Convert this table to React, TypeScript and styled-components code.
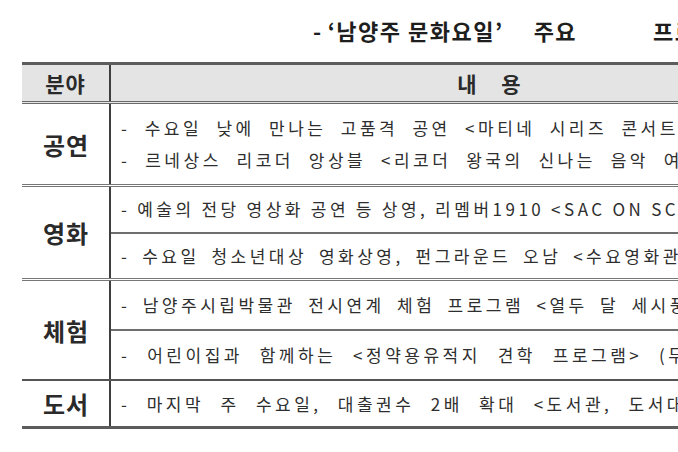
import React from 'react';
import styled, { createGlobalStyle } from 'styled-components';

const GlobalStyle = createGlobalStyle`
  html, body {
    margin: 0;
    padding: 0;
    background: #ffffff;
  }
  body {
    width: 678px;
    height: 452px;
    overflow: hidden;
    font-family: "Noto Sans CJK KR", "Noto Sans", sans-serif;
    color: #2b2b2b;
  }
`;

const Page = styled.div`
  width: 678px;
  height: 452px;
  overflow: hidden;
  padding: 0 0 0 22px;
  box-sizing: border-box;
`;

const Title = styled.div`
  height: 62px;
  display: flex;
  align-items: center;
  padding-left: 291px;
  padding-bottom: 2px;
  box-sizing: border-box;
  white-space: nowrap;
  font-size: 22px;
  font-weight: 700;
  letter-spacing: 1.5px;
  color: #1e1e1e;
`;

// each piece of the title sits after a gap of its own width
const TitlePart = styled.span<{ $gap?: number }>`
  margin-left: ${({ $gap }) => $gap ?? 0}px;
`;

const Table = styled.div`
  width: 850px;
  border-top: 3px solid #5c5c5c;
  border-bottom: 3px solid #5c5c5c;
`;

const HeaderRow = styled.div`
  display: grid;
  grid-template-columns: 89px 1fr;
  height: 39px;
  background: #e4e4e4;
  border-bottom: 3px double #6a6a6a;
  box-sizing: border-box;
`;

const HeadCell = styled.div<{ $divider?: boolean; $spread?: number }>`
  display: flex;
  align-items: center;
  justify-content: center;
  font-size: 21px;
  font-weight: 700;
  color: #2a2a2a;
  letter-spacing: ${({ $spread }) => $spread ?? 1}px;
  word-spacing: ${({ $spread }) => ($spread ? $spread * 2 : 0)}px;
  border-right: ${({ $divider }) => ($divider ? '2px solid #3e3e3e' : 'none')};
`;

const Group = styled.div<{ $height: number; $edge: string }>`
  display: grid;
  grid-template-columns: 89px 1fr;
  height: ${({ $height }) => $height}px;
  box-sizing: border-box;
  border-bottom: ${({ $edge }) => $edge};
  &:last-child {
    border-bottom: none;
  }
`;

const Label = styled.div`
  display: flex;
  align-items: center;
  justify-content: center;
  border-right: 2px solid #3e3e3e;
  font-size: 24px;
  font-weight: 700;
  letter-spacing: 1px;
  padding-left: 1px;
  color: #2a2a2a;
`;

const Items = styled.div`
  display: flex;
  flex-direction: column;
  min-width: 0;
`;

const Item = styled.div<{ $split?: boolean }>`
  flex: 1;
  display: flex;
  flex-direction: column;
  justify-content: center;
  gap: 12px;
  padding-left: 10px;
  border-top: ${({ $split }) => ($split ? '2px solid #6e6e6e' : 'none')};
`;

const Line = styled.div<{ $ws: number }>`
  white-space: nowrap;
  font-size: 17px;
  line-height: 20px;
  letter-spacing: 3.5px;
  word-spacing: ${({ $ws }) => $ws}px;
  color: #2e2e2e;
`;

interface Entry {
  text: string;
  ws: number;
}

interface Section {
  label: string;
  height: number;
  edge: string;
  blocks: Entry[][];
}

const sections: Section[] = [
  {
    label: '공연',
    height: 83,
    edge: '3px double #777777',
    blocks: [
      [
        { text: '- 수요일 낮에 만나는 고품격 공연 <마티네 시리즈 콘서트>', ws: 7 },
        { text: '- 르네상스 리코더 앙상블 <리코더 왕국의 신나는 음악 여행>', ws: 7.5 },
      ],
    ],
  },
  {
    label: '영화',
    height: 94,
    edge: '3px double #777777',
    blocks: [
      [{ text: '- 예술의 전당 영상화 공연 등 상영, 리멤버1910 <SAC ON SCREEN>', ws: -0.5 }],
      [{ text: '- 수요일 청소년대상 영화상영, 펀그라운드 오남 <수요영화관>', ws: 4.5 }],
    ],
  },
  {
    label: '체험',
    height: 100,
    edge: '2px solid #555555',
    blocks: [
      [{ text: '- 남양주시립박물관 전시연계 체험 프로그램 <열두 달 세시풍속>', ws: 5 }],
      [{ text: '- 어린이집과 함께하는 <정약용유적지 견학 프로그램> (무료)', ws: 9.5 }],
    ],
  },
  {
    label: '도서',
    height: 45,
    edge: 'none',
    blocks: [[{ text: '- 마지막 주 수요일, 대출권수 2배 확대 <도서관, 도서대출>', ws: 9 }]],
  },
];

const App: React.FC = () => {
  return (
    <>
      <GlobalStyle />
      <Page>
        <Title>
          <TitlePart>-</TitlePart>
          <TitlePart $gap={5}>‘남양주 문화요일’</TitlePart>
          <TitlePart $gap={30}>주요</TitlePart>
          <TitlePart $gap={76}>프로그램 -</TitlePart>
        </Title>
        <Table>
          <HeaderRow>
            <HeadCell $divider>분야</HeadCell>
            <HeadCell $spread={5}>내 용</HeadCell>
          </HeaderRow>
          {sections.map((s) => (
            <Group key={s.label} $height={s.height} $edge={s.edge}>
              <Label>{s.label}</Label>
              <Items>
                {s.blocks.map((block, i) => (
                  <Item key={i} $split={i > 0}>
                    {block.map((e) => (
                      <Line key={e.text} $ws={e.ws}>
                        {e.text}
                      </Line>
                    ))}
                  </Item>
                ))}
              </Items>
            </Group>
          ))}
        </Table>
      </Page>
    </>
  );
};

export default App;
